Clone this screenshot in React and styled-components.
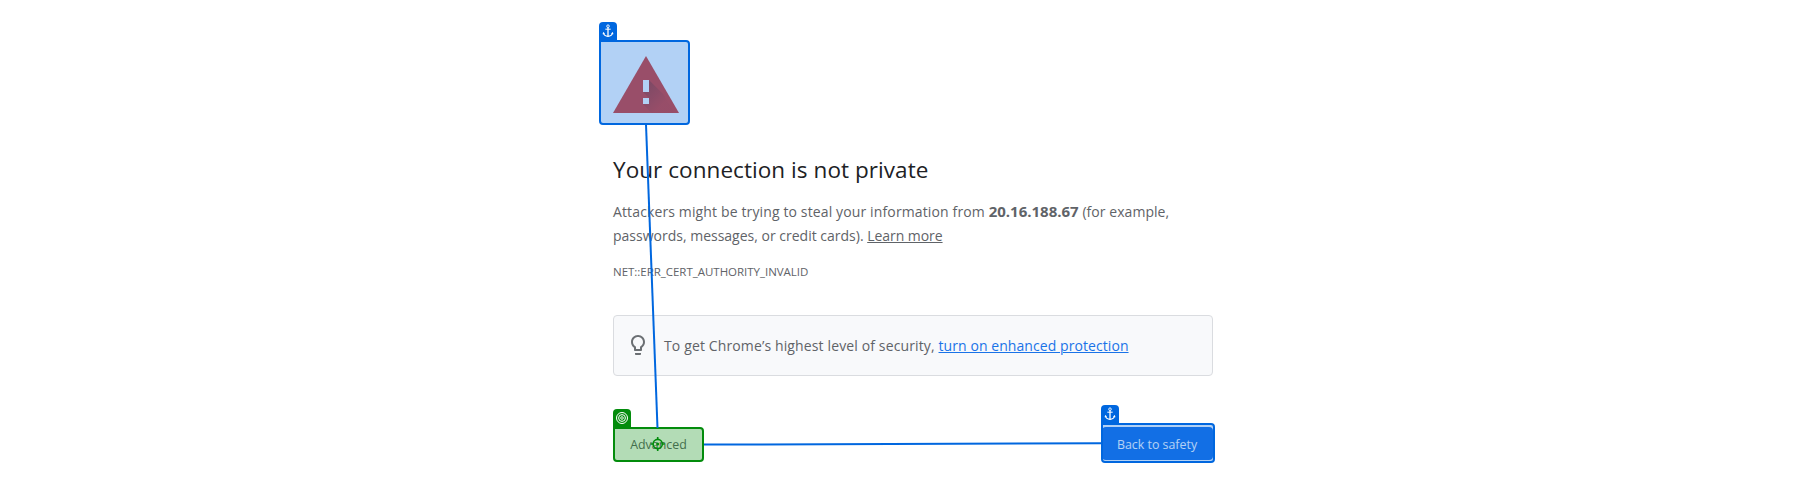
import React from 'react';
import styled, { createGlobalStyle } from 'styled-components';

const GlobalStyle = createGlobalStyle`
  * { box-sizing: border-box; }
  body {
    margin: 0;
    background: #fff;
    color: #5f6368;
    font-family: 'Open Sans', 'Noto Sans', sans-serif;
    font-size: 14px;
    line-height: 24px;
  }
`;

const tones = {
  blue: { solid: '#0067df', tint: 'rgba(0, 103, 223, 0.3)' },
  green: { solid: '#038c0c', tint: 'rgba(3, 140, 12, 0.3)' },
};

const Page = styled.main`
  display: flex;
  justify-content: center;
  height: 483px;
  padding-left: 12px;
  overflow: hidden;
`;

const Column = styled.div`
  position: relative;
  display: flex;
  flex-direction: column;
  width: 600px;
  padding-top: 56px;
`;

const Anchored = styled.div`
  position: relative;
  display: flex;
  width: ${({ $width }) => $width};
`;

const Highlight = styled.div`
  position: absolute;
  inset: ${({ $inset }) => $inset};
  z-index: 1;
  border: 2px solid ${({ $tone }) => tones[$tone].solid};
  border-radius: 0 4px 4px 4px;
  background: ${({ $tone }) => tones[$tone].tint};
`;

const Tag = styled.span`
  position: absolute;
  left: -2px;
  bottom: calc(100% + 2px);
  display: flex;
  align-items: center;
  justify-content: center;
  width: 18px;
  height: 18px;
  border-radius: 4px 4px 0 0;
  background: ${({ $tone }) => tones[$tone].solid};
  svg { display: block; }
`;

const Connectors = styled.svg`
  position: absolute;
  inset: 0;
  z-index: 2;
  overflow: visible;
  pointer-events: none;
`;

const WarningIcon = styled.svg`
  display: block;
  width: 66px;
  height: 57px;
`;

const Title = styled.h1`
  margin: 42px 0 16px;
  color: #202124;
  font-size: 22.5px;
  font-weight: 400;
  line-height: 29px;
  letter-spacing: 0.06px;
`;

const Message = styled.p`
  margin: 0;
  white-space: nowrap;
`;

const Run = styled.span`
  letter-spacing: ${({ $track }) => $track};
`;

const Host = styled.strong`
  font-size: 15px;
  font-weight: 700;
  line-height: 1;
`;

const Link = styled.a`
  color: ${({ $accent }) => ($accent ? '#1a73e8' : 'inherit')};
  letter-spacing: ${({ $accent }) => ($accent ? '0.07px' : '-0.05px')};
  text-decoration: underline;
  text-decoration-thickness: 1px;
  text-underline-offset: 1px;
`;

const ErrorCode = styled.div`
  margin: 15px 0 34px;
  font-size: 11.5px;
  line-height: 18px;
  letter-spacing: -0.03px;
`;

const Promo = styled.section`
  display: flex;
  align-items: center;
  height: 61px;
  padding-left: 17px;
  border: 1px solid #dadce0;
  border-radius: 4px;
  background: #f8f9fb;
  white-space: nowrap;
`;

const Bulb = styled.svg`
  width: 14px;
  height: 20px;
  margin: -2px 19px 0 0;
`;

const Actions = styled.nav`
  display: flex;
  justify-content: space-between;
  align-items: flex-start;
  margin-top: 51px;
`;

const Button = styled.button`
  width: 100%;
  height: ${({ $primary }) => ($primary ? 33 : 35)}px;
  padding: ${({ $primary }) => ($primary ? '2px 1px 0 0' : '1px 0 0')};
  border: 0;
  border-radius: 4px;
  background: ${({ $primary }) => ($primary ? '#1a73e8' : '#fff')};
  color: ${({ $primary }) => ($primary ? '#fff' : '#5f6368')};
  font: 400 12.4px/18px 'Open Sans', 'Noto Sans', sans-serif;
  white-space: nowrap;
`;

const AnchorGlyph = () => (
  <svg width="12" height="14" viewBox="0 0 12 14" fill="none" stroke="#fff">
    <circle cx="6" cy="2.2" r="1.3" strokeWidth="0.9" />
    <path d="M6 3.6V12.2" strokeWidth="1.3" />
    <path d="M3.3 5.2H8.7" strokeWidth="1" />
    <path d="M1.4 8.9C1.9 11.1 3.8 12.3 6 12.4C8.2 12.3 10.1 11.1 10.6 8.9" strokeWidth="1.1" />
    <path d="M0.6 10.2L1.1 8L3.1 9.4ZM11.4 10.2L10.9 8L8.9 9.4Z" fill="#fff" stroke="none" />
  </svg>
);

const TargetGlyph = () => (
  <svg width="14" height="14" viewBox="0 0 14 14" fill="none" stroke="#fff">
    <circle cx="7" cy="7" r="5.5" strokeWidth="1" />
    <circle cx="7" cy="7" r="3.4" strokeWidth="1" />
    <circle cx="7" cy="7" r="1.3" strokeWidth="0.9" />
  </svg>
);

const Marked = ({ tone, inset, width, children }) => (
  <Anchored $width={width}>
    {children}
    <Highlight $tone={tone} $inset={inset}>
      <Tag $tone={tone}>{tone === 'green' ? <TargetGlyph /> : <AnchorGlyph />}</Tag>
    </Highlight>
  </Anchored>
);

export default function App() {
  return (
    <>
      <GlobalStyle />
      <Page>
        <Column>
          <Marked tone="blue" inset="-16px -11px -12px -14px" width="66px">
            <WarningIcon viewBox="0 0 66 57">
              <defs>
                <linearGradient id="shade" x1="33" y1="30" x2="50" y2="47" gradientUnits="userSpaceOnUse">
                  <stop offset="0" stopColor="#3e2723" stopOpacity="0.24" />
                  <stop offset="1" stopColor="#3e2723" stopOpacity="0.02" />
                </linearGradient>
              </defs>
              <path d="M33 0L66 57H0Z" fill="#db4437" />
              <path d="M36 24L50.5 38.5L61.2 57H38.5L30 48L36 42L30 36Z" fill="url(#shade)" />
              <path d="M30 24H36V36H30ZM30 42H36V48H30Z" fill="#fff" />
            </WarningIcon>
          </Marked>
          <Title>Your connection is not private</Title>
          <Message>
            <Run $track="0.13px">Attackers might be trying to steal your information from </Run>
            <Host>20.16.188.67</Host>
            <Run $track="0.05px"> (for example,</Run>
            <br />
            passwords, messages, or credit cards). <Link>Learn more</Link>
          </Message>
          <ErrorCode>NET::ERR_CERT_AUTHORITY_INVALID</ErrorCode>
          <Promo>
            <Bulb viewBox="5 2 14 20" fill="#6b6f73">
              <path d="M9 21c0 .5.4 1 1 1h4c.6 0 1-.5 1-1v-1H9v1zm3-19C8.100 2 5 5.100 5 9c0 2.400 1.200 4.500 3 5.700V17c0 .5.4 1 1 1h6c.6 0 1-.5 1-1v-2.300c1.800-1.300 3-3.400 3-5.700 0-3.900-3.100-7-7-7zm2.900 11.100l-.9.6V16h-4v-2.300l-.9-.6C7.800 12.200 7 10.600 7 9c0-2.800 2.200-5 5-5s5 2.200 5 5c0 1.600-.8 3.200-2.100 4.100z" />
            </Bulb>
            <span>
              <Run $track="0.13px">To get Chrome’s highest level of security, </Run>
              <Link $accent>turn on enhanced protection</Link>
            </span>
          </Promo>
          <Actions>
            <Marked tone="green" inset="0" width="91px">
              <Button>Advanced</Button>
            </Marked>
            <Marked tone="blue" inset="-4px -2px -3px -1px" width="111px">
              <Button $primary>Back to safety</Button>
            </Marked>
          </Actions>
          <Connectors width="600" height="483" viewBox="0 0 600 483" fill="none">
            <path d="M33 124.500L44.500 428" stroke="#0067df" strokeWidth="2" />
            <path d="M91 444.600L488.500 443.200" stroke="#0067df" strokeWidth="2" />
            <g stroke="#038c0c" strokeWidth="1.600">
              <circle cx="44.700" cy="444" r="4.600" />
              <path d="M44.700 437V439.500M44.700 448.500V451M37.700 444H40.200M49.200 444H51.700" />
              <circle cx="44.700" cy="444" r="1.500" fill="#038c0c" stroke="none" />
            </g>
          </Connectors>
        </Column>
      </Page>
    </>
  );
}
